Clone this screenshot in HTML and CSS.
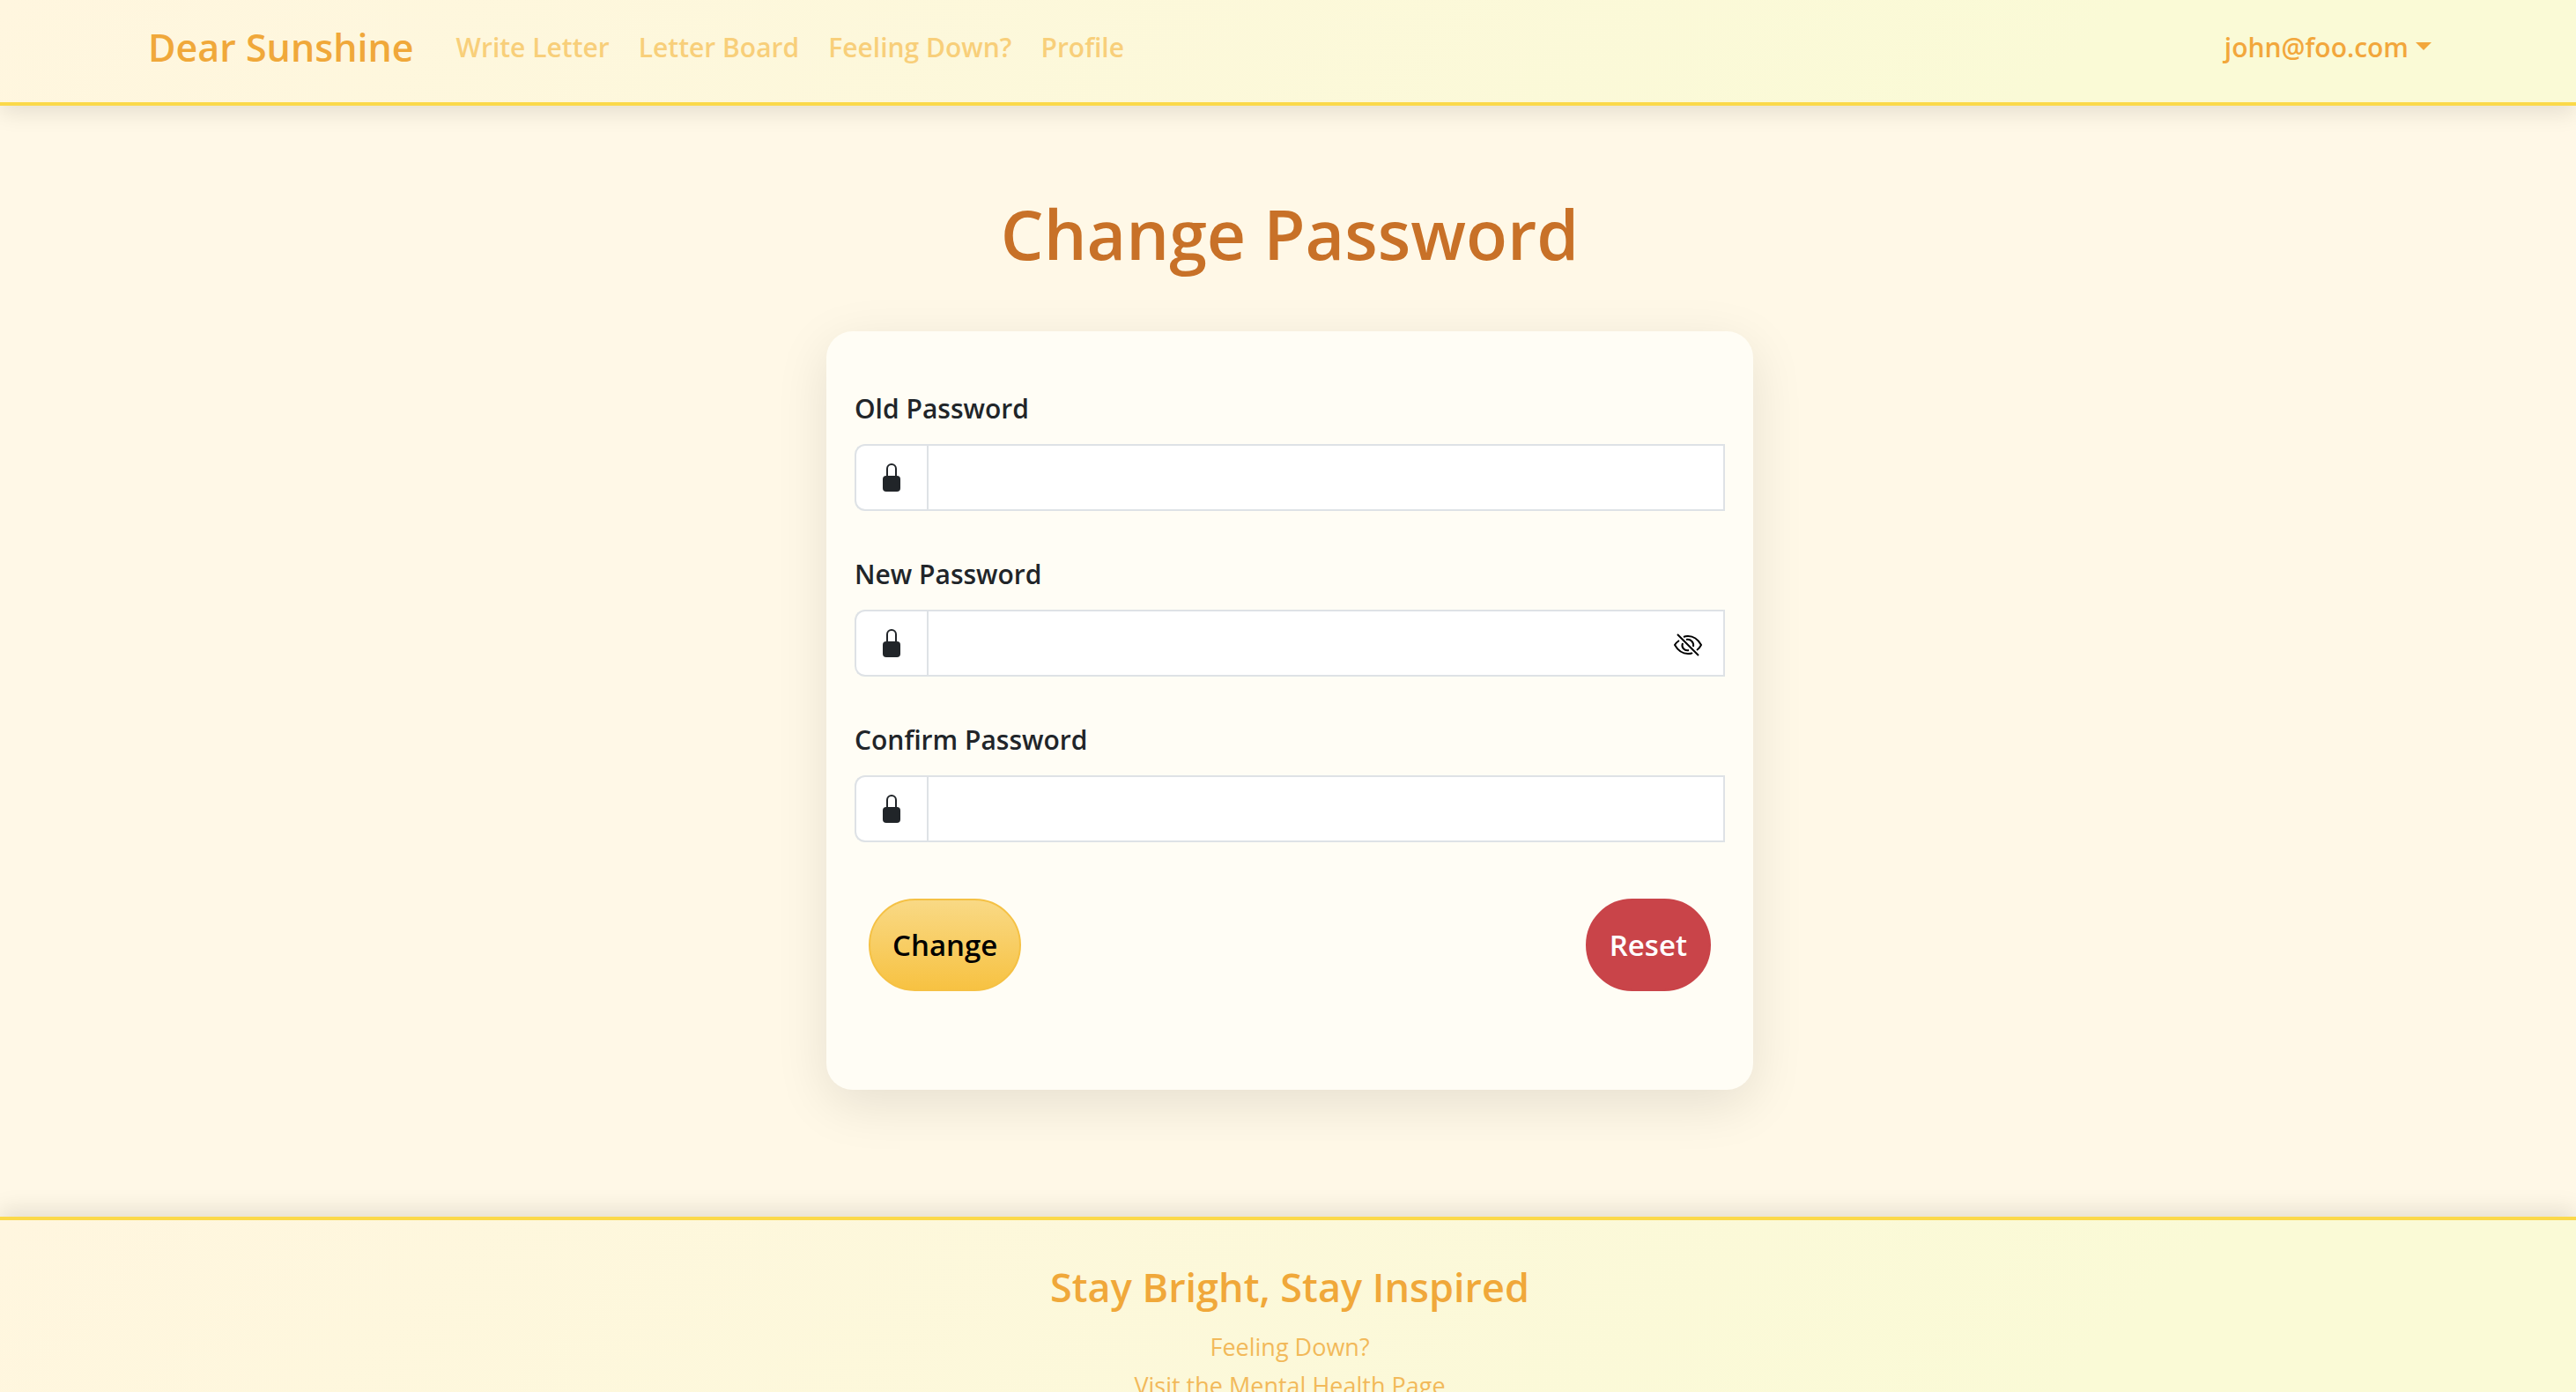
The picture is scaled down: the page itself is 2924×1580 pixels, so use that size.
FILE: index.html
```
<!DOCTYPE html>
<html lang="en">
<head>
<meta charset="utf-8">
<meta name="viewport" content="width=device-width, initial-scale=1">
<title>Change Password - Dear Sunshine</title>
<link rel="stylesheet" href="styles.css">
</head>
<body>
<header class="navbar">
  <nav class="container">
    <a class="brand" href="#">Dear Sunshine</a>
    <ul class="nav-links">
      <li><a href="#">Write Letter</a></li>
      <li><a href="#">Letter Board</a></li>
      <li><a href="#">Feeling Down?</a></li>
      <li><a href="#">Profile</a></li>
    </ul>
    <button class="account" type="button" aria-haspopup="true">john@foo.com<span class="caret"></span></button>
  </nav>
</header>

<main class="content">
  <h1>Change Password</h1>
  <form class="card">
    <div class="field">
      <label for="old-password">Old Password</label>
      <div class="input-group">
        <span class="addon"><svg class="lock" viewBox="0 0 20 32" aria-hidden="true"><path d="M5 15V6a5 5 0 0 1 10 0v9" fill="none" stroke="currentColor" stroke-width="2"/><rect y="14" width="20" height="18" rx="4" fill="currentColor"/></svg></span>
        <input id="old-password" type="password">
      </div>
    </div>
    <div class="field">
      <label for="new-password">New Password</label>
      <div class="input-group">
        <span class="addon"><svg class="lock" viewBox="0 0 20 32" aria-hidden="true"><path d="M5 15V6a5 5 0 0 1 10 0v9" fill="none" stroke="currentColor" stroke-width="2"/><rect y="14" width="20" height="18" rx="4" fill="currentColor"/></svg></span>
        <input id="new-password" type="password">
        <button class="reveal" type="button" aria-label="Show password"><svg viewBox="0 0 32 26" aria-hidden="true"><g fill="none" stroke="currentColor" stroke-width="2"><path d="M4 1l24 24M6 8C3 10 1 13 1 13c4 7 9 10 15 10 2 0 4 0 5-1M11 4c2-1 3-1 5-1 6 0 11 3 15 10 0 0-2 4-5 6"/><path d="M10 11c-2 5 2 9 7 8M14 7c5-1 9 3 8 8"/></g></svg></button>
      </div>
    </div>
    <div class="field">
      <label for="confirm-password">Confirm Password</label>
      <div class="input-group">
        <span class="addon"><svg class="lock" viewBox="0 0 20 32" aria-hidden="true"><path d="M5 15V6a5 5 0 0 1 10 0v9" fill="none" stroke="currentColor" stroke-width="2"/><rect y="14" width="20" height="18" rx="4" fill="currentColor"/></svg></span>
        <input id="confirm-password" type="password">
      </div>
    </div>
    <div class="actions">
      <button class="btn btn-change" type="submit">Change</button>
      <button class="btn btn-reset" type="reset">Reset</button>
    </div>
  </form>
</main>

<footer class="footer">
  <h2>Stay Bright, Stay Inspired</h2>
  <a href="#">Feeling Down?</a>
  <a href="#">Visit the Mental Health Page</a>
</footer>
</body>
</html>
```
FILE: styles.css
```
* {
  box-sizing: border-box;
}

body {
  margin: 0;
  background: #fff8e7;
  color: #212529;
  font-family: "Open Sans", sans-serif;
  font-size: 30px;
  line-height: 44px;
}

a {
  color: inherit;
  text-decoration: none;
}

button,
input {
  font: inherit;
}

.navbar {
  padding: 18px 0 26px;
  border-bottom: 4px solid #fbd94a;
  background: linear-gradient(135deg, #fff6df, #fafad6 80%);
  box-shadow: 0 8px 24px rgba(0, 0, 0, 0.1);
}

.container {
  display: flex;
  align-items: center;
  max-width: 2640px;
  min-height: 72px;
  margin: 0 auto;
  padding: 0 22px 0 26px;
}

.brand {
  margin-right: 48px;
  color: #f0a83a;
  font-size: 43px;
  font-weight: 600;
}

.nav-links {
  display: flex;
  gap: 33px;
  flex: 1;
  margin: 0;
  padding: 0;
  color: #f8cf7a;
  font-weight: 600;
  list-style: none;
}

.account {
  display: flex;
  align-items: center;
  gap: 8px;
  padding: 0;
  border: 0;
  background: none;
  color: #f2a73c;
  font-weight: 600;
}

.caret {
  margin-bottom: 4px;
  border: 9px solid transparent;
  border-top-color: currentColor;
  border-bottom: 0;
}

.content {
  display: flex;
  flex-direction: column;
  align-items: center;
  padding: 92px 22px 144px 26px;
}

h1 {
  margin: 0 0 56px;
  color: #c87128;
  font-size: 77px;
  font-weight: 600;
  line-height: 108px;
}

.card {
  width: 100%;
  max-width: 1052px;
  padding: 66px 32px 112px;
  border-radius: 30px;
  background: #fffdf5;
  box-shadow: 0 16px 60px rgba(0, 0, 0, 0.1);
}

.field {
  margin-bottom: 50px;
}

.field label {
  display: block;
  margin-bottom: 18px;
  font-weight: 600;
}

.input-group {
  position: relative;
  display: flex;
  height: 76px;
}

.addon {
  display: grid;
  place-items: center;
  width: 82px;
  border: 2px solid #dee2e6;
  border-right: 0;
  border-radius: 12px 0 0 12px;
  background: #fff;
}

.lock {
  width: 20px;
  height: 32px;
}

.input-group input {
  flex: 1;
  min-width: 0;
  padding: 12px 24px;
  border: 2px solid #dee2e6;
  border-radius: 0;
  background: #fff;
}

.reveal {
  position: absolute;
  top: 22px;
  right: 24px;
  display: grid;
  padding: 5px 2px;
  border: 0;
  background: none;
  color: #000;
}

.reveal svg {
  width: 32px;
  height: 26px;
}

.actions {
  display: flex;
  justify-content: space-between;
  margin-top: 64px;
  padding: 0 16px;
}

.btn {
  height: 105px;
  padding: 0 25px;
  border: 2px solid;
  border-radius: 53px;
  font-size: 33px;
  font-weight: 600;
}

.btn-change {
  border-color: #f5c144;
  background: linear-gradient(#f9d985, #f7c242);
  color: #000;
}

.btn-reset {
  border-color: #c94449;
  background: #c94449;
  color: #fff;
}

.footer {
  display: flex;
  flex-direction: column;
  align-items: center;
  padding: 46px 22px 48px 26px;
  border-top: 4px solid #fbd94a;
  background: linear-gradient(135deg, #fff6df, #fafad6 80%);
  box-shadow: 0 -8px 24px rgba(0, 0, 0, 0.1);
  color: #f2b95a;
  font-size: 27px;
}

.footer h2 {
  margin: 0 0 16px;
  color: #f0a83a;
  font-size: 45px;
  font-weight: 600;
  line-height: 60px;
}
```
